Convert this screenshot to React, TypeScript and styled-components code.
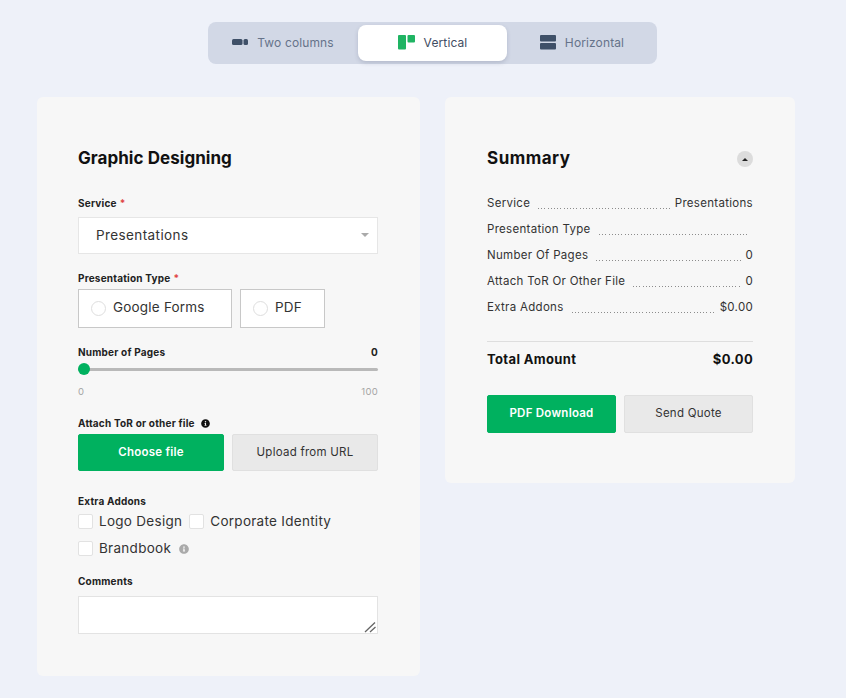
import React from 'react'
import styled, { createGlobalStyle } from 'styled-components'
import { FaInfoCircle } from 'react-icons/fa'

const GlobalStyle = createGlobalStyle`
   html, body {
      margin: 0;
      padding: 0;
      background: #eef1f9;
      font-family: Inter, "Open Sans", sans-serif;
      color: #222;
   }
   * {
      box-sizing: border-box;
   }
`

const Page = styled.div`
   width: 846px;
   height: 698px;
   overflow: hidden;
   padding-top: 22px;
`

const TabBar = styled.div`
   width: 449px;
   height: 42px;
   margin: 0 0 33px 208px;
   padding: 3px 0;
   display: flex;
   background: #d2d8e6;
   border-radius: 8px;
`

const Tab = styled.div<{ $active?: boolean }>`
   flex: 0 0 ${(p) => (p.$active ? '149px' : '150px')};
   display: flex;
   align-items: center;
   justify-content: center;
   gap: 9px;
   padding-bottom: 2px;
   font-size: 12px;
   letter-spacing: 0.12px;
   color: ${(p) => (p.$active ? '#3f4d63' : '#66738a')};
   background: ${(p) => (p.$active ? '#fff' : 'transparent')};
   border-radius: 8px;
   box-shadow: ${(p) => (p.$active ? '0 2px 4px rgba(60, 70, 100, 0.2)' : 'none')};
`

const Columns = styled.div`
   display: flex;
   align-items: flex-start;
   gap: 25px;
   padding-left: 37px;
`

const Card = styled.section<{ $width: number; $height: number; $left: number }>`
   width: ${(p) => p.$width}px;
   height: ${(p) => p.$height}px;
   padding: 49px 42px 0 ${(p) => p.$left}px;
   background: #f7f7f7;
   border-radius: 6px;
`

const Title = styled.h2`
   margin: 0;
   height: 24px;
   line-height: 24px;
   font-size: 17px;
   font-weight: 700;
   letter-spacing: 0.05px;
   color: #111;
`

const SummaryTitle = styled(Title)`
   letter-spacing: 0.5px;
`

const Label = styled.div`
   height: 14px;
   line-height: 14px;
   font-size: 10px;
   font-weight: 700;
   letter-spacing: 0.2px;
   color: #222;
   display: flex;
   align-items: center;
`

const Req = styled.span`
   color: #e04444;
   margin-left: 3px;
`

const Section = styled.div<{ $top: number }>`
   margin-top: ${(p) => p.$top}px;
`

const SelectBox = styled.div`
   height: 37px;
   margin-top: 7px;
   padding: 0 8px 2px 17px;
   display: flex;
   align-items: center;
   justify-content: space-between;
   background: #fff;
   border: 1px solid #e6e6e6;
   font-size: 13.5px;
   letter-spacing: 0.4px;
   color: #333;
`

const Caret = styled.i<{ $up?: boolean; $size?: number; $color?: string }>`
   width: 0;
   height: 0;
   border-left: ${(p) => p.$size ?? 4}px solid transparent;
   border-right: ${(p) => p.$size ?? 4}px solid transparent;
   ${(p) => (p.$up ? 'border-bottom' : 'border-top')}: ${(p) => p.$size ?? 4}px solid ${(p) => p.$color ?? '#aaa'};
`

const RadioRow = styled.div`
   margin-top: 4px;
   display: flex;
   gap: 8px;
`

const RadioCard = styled.div<{ $width: number }>`
   width: ${(p) => p.$width}px;
   height: 39px;
   padding-left: 12px;
   display: flex;
   align-items: center;
   gap: 7px;
   background: #fff;
   border: 1px solid #c8c8c8;
   font-size: 13.5px;
   letter-spacing: 0.2px;
   line-height: 16px;
   color: #333;
`

const RadioText = styled.span`
   margin-top: -3px;
`

const RadioDot = styled.span`
   width: 15px;
   height: 15px;
   border-radius: 50%;
   border: 1px solid #dedede;
   background: #fff;
`

const SpreadLabel = styled(Label)`
   justify-content: space-between;
`

const Track = styled.div`
   position: relative;
   height: 3px;
   margin-top: 9px;
   background: #b9b9b9;
   border-radius: 2px;
`

const Thumb = styled.span`
   position: absolute;
   left: 0;
   top: -5px;
   width: 12px;
   height: 12px;
   border-radius: 50%;
   background: #00b15f;
`

const Range = styled.div`
   margin-top: 14px;
   display: flex;
   justify-content: space-between;
   font-size: 9.5px;
   line-height: 14px;
   letter-spacing: 0.3px;
   color: #a5a5a5;
`

const InfoDark = styled.span`
   display: inline-flex;
   margin-left: 6px;
   font-size: 9px;
   color: #111;
`

const ButtonRow = styled.div<{ $gap: number; $top: number }>`
   margin-top: ${(p) => p.$top}px;
   display: flex;
   gap: ${(p) => p.$gap}px;
`

const Button = styled.button<{ $primary?: boolean; $width: number; $height: number }>`
   width: ${(p) => p.$width}px;
   height: ${(p) => p.$height}px;
   padding: 0 0 2px;
   font-family: inherit;
   font-size: 11.5px;
   letter-spacing: 0.25px;
   font-weight: ${(p) => (p.$primary ? 600 : 400)};
   color: ${(p) => (p.$primary ? '#fff' : '#333')};
   background: ${(p) => (p.$primary ? '#00b15f' : '#e9e9e9')};
   border: 1px solid ${(p) => (p.$primary ? '#00b15f' : '#e0e0e0')};
   border-radius: 2px;
`

const CheckRow = styled.div`
   display: flex;
   align-items: center;
   height: 27px;
   font-size: 13.5px;
   letter-spacing: 0.28px;
   color: #333;
`

const Check = styled.span`
   flex: none;
   width: 15px;
   height: 15px;
   margin-right: 6px;
   background: #fff;
   border: 1px solid #e2e2e2;
   border-radius: 2px;
`

const CheckText = styled.span`
   margin: -1px 7px 0 0;
`

const InfoGrey = styled.span`
   display: inline-flex;
   margin-left: 1px;
   font-size: 10px;
   color: #aaa;
`

const CommentBox = styled.div`
   position: relative;
   margin-top: 8px;
`

const Comments = styled.textarea`
   display: block;
   width: 100%;
   height: 38px;
   background: #fff;
   border: 1px solid #e3e3e3;
   border-radius: 0;
   outline: none;
   resize: none;
`

const Grip = styled.svg`
   position: absolute;
   right: 1px;
   bottom: 1px;
`

const SummaryHead = styled.div`
   display: flex;
   align-items: center;
   justify-content: space-between;
`

const Toggle = styled.span`
   width: 16px;
   height: 16px;
   margin-top: 2px;
   display: flex;
   align-items: center;
   justify-content: center;
   border-radius: 50%;
   background: #dcdcdc;
`

const Lines = styled.div`
   margin-top: 20px;
`

const Line = styled.div`
   height: 26px;
   display: flex;
   align-items: center;
   font-size: 11.5px;
   letter-spacing: 0.3px;
   color: #333;
`

const Leader = styled.span`
   flex: 1;
   height: 1px;
   margin: 10px 4px 0 8px;
   background: repeating-linear-gradient(to right, #8c8c8c 0 1px, transparent 1px 3.2px);
`

const Rule = styled.hr`
   height: 1px;
   margin: 21px 0 0;
   border: 0;
   background: #dedede;
`

const Total = styled.div`
   height: 34px;
   display: flex;
   align-items: center;
   justify-content: space-between;
   font-size: 13px;
   font-weight: 700;
   letter-spacing: 0.35px;
   color: #111;
`

const twoColumns = (
   <svg width="16" height="8" viewBox="0 0 16 8">
      <rect x="0" y="1" width="10.5" height="6" rx="1.5" fill="#3f5068" />
      <rect x="11.5" y="1" width="4.5" height="6" rx="1.5" fill="#3f5068" />
   </svg>
)

const vertical = (
   <svg width="17" height="15" viewBox="0 0 17 15">
      <rect x="0" y="0" width="8" height="14.5" rx="1" fill="#1fb463" />
      <rect x="9.5" y="0" width="7.5" height="7.5" rx="1" fill="#1fb463" />
   </svg>
)

const horizontal = (
   <svg width="16" height="15" viewBox="0 0 16 15">
      <rect x="0" y="0" width="16" height="6.5" rx="1" fill="#3f5068" />
      <rect x="0" y="8" width="16" height="6.5" rx="1" fill="#3f5068" />
   </svg>
)

const lines: [string, string][] = [
   ['Service', 'Presentations'],
   ['Presentation Type', ''],
   ['Number Of Pages', '0'],
   ['Attach ToR Or Other File', '0'],
   ['Extra Addons', '$0.00'],
]

const App: React.FC = () => (
   <Page>
      <GlobalStyle />
      <TabBar>
         <Tab>{twoColumns} Two columns</Tab>
         <Tab $active>{vertical} Vertical</Tab>
         <Tab>{horizontal} Horizontal</Tab>
      </TabBar>
      <Columns>
         <Card $width={383} $height={579} $left={41}>
            <Title>Graphic Designing</Title>
            <Section $top={26}>
               <Label>Service<Req>*</Req></Label>
               <SelectBox>
                  Presentations
                  <Caret />
               </SelectBox>
            </Section>
            <Section $top={17}>
               <Label>Presentation Type<Req>*</Req></Label>
               <RadioRow>
                  <RadioCard $width={154}><RadioDot /><RadioText>Google Forms</RadioText></RadioCard>
                  <RadioCard $width={85}><RadioDot /><RadioText>PDF</RadioText></RadioCard>
               </RadioRow>
            </Section>
            <Section $top={17}>
               <SpreadLabel><span>Number of Pages</span><span>0</span></SpreadLabel>
               <Track><Thumb /></Track>
               <Range><span>0</span><span>100</span></Range>
            </Section>
            <Section $top={17}>
               <Label>Attach ToR or other file<InfoDark><FaInfoCircle /></InfoDark></Label>
               <ButtonRow $gap={8} $top={4}>
                  <Button $primary $width={146} $height={37}>Choose file</Button>
                  <Button $width={146} $height={37}>Upload from URL</Button>
               </ButtonRow>
            </Section>
            <Section $top={23}>
               <Label>Extra Addons</Label>
               <CheckRow>
                  <Check /><CheckText>Logo Design</CheckText>
                  <Check /><CheckText>Corporate Identity</CheckText>
               </CheckRow>
               <CheckRow>
                  <Check /><CheckText>Brandbook</CheckText>
                  <InfoGrey><FaInfoCircle /></InfoGrey>
               </CheckRow>
            </Section>
            <Section $top={12}>
               <Label>Comments</Label>
               <CommentBox>
                  <Comments />
                  <Grip width="13" height="12" viewBox="0 0 13 12">
                     <path d="M1 11 L11 1.5 M6 11 L11.5 6" stroke="#666" strokeWidth="1.3" fill="none" />
                  </Grip>
               </CommentBox>
            </Section>
         </Card>
         <Card $width={350} $height={386} $left={42}>
            <SummaryHead>
               <SummaryTitle>Summary</SummaryTitle>
               <Toggle><Caret $up $size={3} $color="#222" /></Toggle>
            </SummaryHead>
            <Lines>
               {lines.map(([name, value]) => (
                  <Line key={name}>
                     {name}
                     <Leader />
                     {value}
                  </Line>
               ))}
            </Lines>
            <Rule />
            <Total><span>Total Amount</span><span>$0.00</span></Total>
            <ButtonRow $gap={8} $top={19}>
               <Button $primary $width={129} $height={38}>PDF Download</Button>
               <Button $width={129} $height={38}>Send Quote</Button>
            </ButtonRow>
         </Card>
      </Columns>
   </Page>
)

export default App
